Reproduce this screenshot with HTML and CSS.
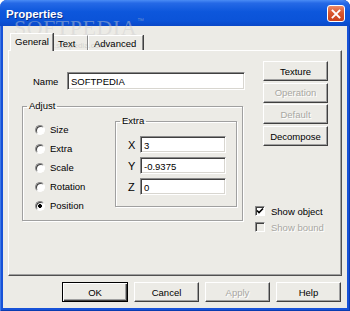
FILE: index.html
```html
<!DOCTYPE html>
<html lang="en">
<head>
    <meta charset="UTF-8">
    <title>Properties</title>
    <link rel="stylesheet" href="styles.css">
</head>
<body>
    <div class="window">
        <div class="titlebar">
            <span class="title">Properties</span>
            <span class="close">
                <svg width="10" height="10" viewBox="0 0 10 10">
                    <path d="M1.5 1.5 L8.5 8.5 M8.5 1.5 L1.5 8.5" stroke="#fff" stroke-width="1.8" stroke-linecap="square"/>
                </svg>
            </span>
        </div>

        <div class="client">
            <div class="tabs">
                <div class="tab active">General</div>
                <div class="tab">Text</div>
                <div class="tab last">Advanced</div>
            </div>

            <div class="panel">
                <div class="left">
                    <div class="name-row">
                        <span class="name-label">Name</span>
                        <div class="field name-field">SOFTPEDIA</div>
                    </div>

                    <fieldset class="group adjust">
                        <legend>Adjust</legend>
                        <div class="adjust-body">
                            <div class="radios">
                                <div class="radio"><span class="dot"></span>Size</div>
                                <div class="radio"><span class="dot"></span>Extra</div>
                                <div class="radio"><span class="dot"></span>Scale</div>
                                <div class="radio"><span class="dot"></span>Rotation</div>
                                <div class="radio"><span class="dot on"></span>Position</div>
                            </div>
                            <fieldset class="group extra">
                                <legend>Extra</legend>
                                <div class="xyz">
                                    <div class="xyz-row"><span class="axis">X</span><div class="field">3</div></div>
                                    <div class="xyz-row"><span class="axis">Y</span><div class="field">-0.9375</div></div>
                                    <div class="xyz-row"><span class="axis">Z</span><div class="field">0</div></div>
                                </div>
                            </fieldset>
                        </div>
                    </fieldset>
                </div>

                <div class="right">
                    <div class="side-buttons">
                        <button class="btn">Texture</button>
                        <button class="btn disabled">Operation</button>
                        <button class="btn disabled">Default</button>
                        <button class="btn">Decompose</button>
                    </div>
                    <div class="checks">
                        <div class="check">
                            <span class="box">
                                <svg width="8" height="8" viewBox="0 0 8 8">
                                    <path d="M1 3.5 L3 5.5 L7 1.5" fill="none" stroke="#000" stroke-width="1.6"/>
                                </svg>
                            </span>Show object
                        </div>
                        <div class="check off"><span class="box"></span>Show bound</div>
                    </div>
                </div>
            </div>

            <div class="footer">
                <button class="btn default">OK</button>
                <button class="btn">Cancel</button>
                <button class="btn disabled">Apply</button>
                <button class="btn">Help</button>
            </div>
        </div>

        <div class="watermark">SOFTPEDIA<sup>™</sup></div>
        <div class="watermark-url">www.softpedia.com</div>
    </div>
</body>
</html>
```

FILE: styles.css
```css
body {
    margin: 0;
    font-family: "Liberation Sans", Arial, sans-serif;
    font-size: 9.5px;
    color: #000;
}

.window {
    position: relative;
    width: 350px;
    height: 311px;
    box-sizing: border-box;
    padding: 0 3px 3px 3px;
    background: #1752d8;
    border-radius: 7px 7px 0 0;
    box-shadow: inset 1px 0 #3f78e6, inset -1px 0 #0a3cb0, inset 0 -1px #0a3cb0;
    overflow: hidden;
}

/* title bar */
.titlebar {
    height: 26px;
    margin: 0 -3px;
    padding: 0 5px 0 6px;
    display: flex;
    align-items: center;
    justify-content: space-between;
    border-radius: 7px 7px 0 0;
    background: linear-gradient(#4a8cf5 0%, #2569e6 12%, #0d57dc 45%, #0b53d8 80%, #0a48c8 100%);
}
.title {
    color: #fff;
    font-weight: bold;
    font-size: 11.5px;
    padding-top: 2px;
    text-shadow: 1px 1px #0a2f8a;
}
.close {
    width: 16px;
    height: 15px;
    display: flex;
    align-items: center;
    justify-content: center;
    border: 1px solid #fff;
    border-radius: 3px;
    background: linear-gradient(#ec8a68, #d9572f 45%, #c8411c);
    margin-top: 1px;
}

/* client area */
.client {
    height: 282px;
    background: #ecebe6;
    padding-top: 7px;
    box-sizing: border-box;
}

.tabs {
    display: flex;
    align-items: flex-start;
    height: 17px;
    margin-left: 7px;
}
.tab {
    height: 15px;
    margin-top: 2px;
    line-height: 15px;
    box-sizing: border-box;
    padding: 0 5px;
    border-top: 1px solid #fff;
    border-left: 1px solid #fff;
    border-right: 1px solid #8a8a8a;
    box-shadow: 1px 0 #404040;
}
.tab.active {
    position: relative;
    z-index: 1;
    height: 18px;
    margin-top: 0;
    line-height: 16px;
    width: 43px;
    padding: 0 4px;
    background: #ecebe6;
}
.tab:nth-child(2) {
    width: 35px;
    border-left: none;
}
.tab.last {
    width: 55px;
}

.panel {
    margin: 0 5px;
    height: 226px;
    box-sizing: border-box;
    display: flex;
    padding: 10px 0 0 13px;
    border-top: 1px solid #fff;
    border-left: 1px solid #fff;
    border-right: 1px solid #505050;
    border-bottom: 1px solid #505050;
    box-shadow: inset -1px -1px #a0a0a0;
}

.left {
    width: 223px;
}
.name-row {
    display: flex;
    align-items: center;
    margin-top: 11px;
    padding-left: 11px;
}
.name-label {
    width: 34px;
}

.field {
    height: 17px;
    box-sizing: border-box;
    background: #fff;
    padding: 2px 3px;
    line-height: 13px;
    border-top: 1px solid #8a8a8a;
    border-left: 1px solid #8a8a8a;
    border-right: 1px solid #fff;
    border-bottom: 1px solid #fff;
    box-shadow: inset 1px 1px #404040, inset -1px -1px #d8d6d0;
}
.name-field {
    width: 178px;
    height: 18px;
}

/* group boxes */
.group {
    margin: 0;
    padding: 0;
    box-sizing: border-box;
    min-inline-size: 0;
    border: 1px solid #a0a0a0;
    box-shadow: inset 1px 1px #fff, 1px 1px #fff;
}
.group legend {
    padding: 0 2px;
    margin-left: 4px;
    line-height: 12px;
}
.adjust {
    margin-top: 10px;
    width: 221px;
    height: 121px;
}
.adjust-body {
    display: flex;
    padding-left: 12px;
}
.radios {
    width: 80px;
    padding-top: 8px;
}
.radio {
    height: 19px;
    display: flex;
    align-items: center;
}
.dot {
    width: 10px;
    height: 10px;
    box-sizing: border-box;
    border-radius: 50%;
    margin-right: 5px;
    background: #fff;
    border: 1px solid;
    border-color: #8a8a8a #fff #fff #8a8a8a;
    box-shadow: inset 1px 1px #404040;
}
.dot.on {
    background: radial-gradient(circle, #000 0 1.6px, #fff 2.2px);
}

.extra {
    margin-top: 3px;
    width: 122px;
    height: 92px;
}
.xyz {
    padding: 9px 0 0 12px;
    display: flex;
    flex-direction: column;
    gap: 4px;
}
.xyz-row {
    display: flex;
    align-items: center;
}
.axis {
    width: 12px;
    font-size: 11px;
}
.xyz .field {
    width: 86px;
}

/* right column */
.right {
    margin-left: 10px;
}
.side-buttons {
    display: flex;
    flex-direction: column;
    gap: 1.7px;
    padding-left: 8px;
}

.btn {
    font-family: inherit;
    font-size: 9.5px;
    width: 65px;
    height: 20px;
    padding: 0;
    background: #ecebe6;
    color: #000;
    border: 1px solid;
    border-color: #fff #404040 #404040 #fff;
    box-shadow: inset -1px -1px #a0a0a0;
}
.btn.disabled {
    color: #a8a7a2;
    text-shadow: 1px 1px #fff;
}
.btn.default {
    width: 66px;
    border: 1px solid #000;
    box-shadow: inset 1px 1px #fff, inset -1px -1px #404040, inset -2px -2px #a0a0a0;
}

.checks {
    margin-top: 57px;
}
.check {
    height: 16px;
    display: flex;
    align-items: center;
}
.box {
    width: 10px;
    height: 10px;
    box-sizing: border-box;
    margin-right: 6px;
    background: #fff;
    display: flex;
    align-items: center;
    justify-content: center;
    border: 1px solid;
    border-color: #8a8a8a #fff #fff #8a8a8a;
    box-shadow: inset 1px 1px #404040;
}
.check.off {
    color: #a8a7a2;
    text-shadow: 1px 1px #fff;
}
.check.off .box {
    background: #ecebe6;
}

.footer {
    display: flex;
    justify-content: flex-end;
    gap: 6px;
    padding: 6px 6px 0 0;
}

/* screenshot watermark */
.watermark {
    position: absolute;
    left: 14px;
    top: 15px;
    font-family: "Liberation Serif", serif;
    font-size: 22px;
    letter-spacing: 0.5px;
    color: rgba(205, 205, 205, 0.45);
}
.watermark sup {
    font-family: "Liberation Sans", sans-serif;
    font-size: 7px;
    vertical-align: 12px;
}
.watermark-url {
    position: absolute;
    left: 37px;
    top: 41px;
    font-size: 8px;
    color: rgba(150, 150, 150, 0.3);
}
```
